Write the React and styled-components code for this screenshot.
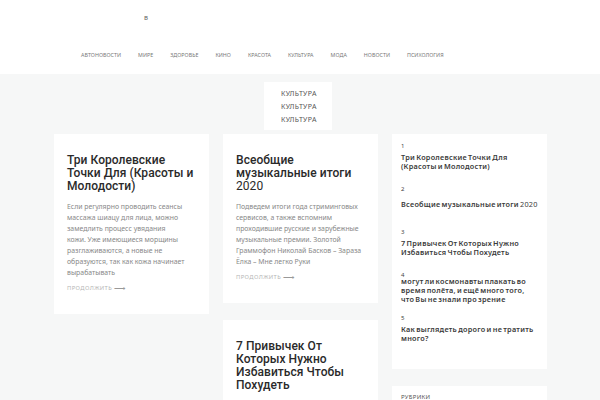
import React from "react";
import styled, { createGlobalStyle } from "styled-components";

const Global = createGlobalStyle`
  html, body { margin: 0; padding: 0; background: #f6f7f7; }
  body { font-family: "Noto Sans", "Open Sans", sans-serif; overflow: hidden; }
  * { box-sizing: border-box; }
`;

const Page = styled.div`
  width: 600px;
  height: 400px;
  overflow: hidden;
  background: #f6f7f7;
`;

const Header = styled.header`
  background: #fff;
  height: 74px;
  display: flex;
  flex-direction: column;
`;

const Logo = styled.div`
  height: 36px;
  padding: 13px 0 0 144px;
  font-size: 7px;
  line-height: 10px;
  color: #666;
`;

const Nav = styled.nav`
  display: flex;
  gap: 17px;
  padding-left: 81px;
`;

const NavItem = styled.div`
  position: relative;
  font-size: 5.35px;
  line-height: 38px;
  letter-spacing: 0.02px;
  text-transform: uppercase;
  color: #777;
  white-space: nowrap;
`;

const Dropdown = styled.div`
  position: absolute;
  top: 46px;
  left: -24px;
  width: 68px;
  background: #fff;
  padding: 5px 0 4px 17px;
  display: flex;
  flex-direction: column;
  z-index: 2;
`;

const DropItem = styled.div`
  font-size: 7px;
  line-height: 13px;
  letter-spacing: 0.3px;
  color: #555;
  text-transform: uppercase;
`;

const Main = styled.main`
  width: 492px;
  margin: 60px auto 0;
  display: flex;
  gap: 14px;
  align-items: flex-start;
`;

const Column = styled.div`
  width: 155px;
  flex: none;
  display: flex;
  flex-direction: column;
  gap: 17px;
`;

const Card = styled.article`
  background: #fff;
  padding: 20px 10px 22px 13px;
`;

const Title = styled.h2`
  margin: 0 -2px 0 0;
  font-family: "Roboto", "Noto Sans", sans-serif;
  font-weight: 500;
  font-size: 12px;
  line-height: 13px;
  letter-spacing: 0.05px;
  color: #2a2a2a;
`;

const Light = styled.span`
  font-weight: 400;
`;

const Excerpt = styled.p`
  margin: 8px 0 0;
  font-size: 6.9px;
  line-height: 11px;
  color: #888;
  white-space: pre-line;
`;

const More = styled.div`
  margin-top: 6px;
  font-size: 5.8px;
  line-height: 8px;
  letter-spacing: 0.4px;
  color: #b5b5b5;
  text-transform: uppercase;
  display: flex;
  align-items: center;
  gap: 2px;
`;

const Arrow = styled.span`
  font-size: 8px;
  line-height: 8px;
  color: #999;
`;

const Widget = styled.aside`
  background: #fff;
  padding: 8px 6px 12px 9px;
`;

const Item = styled.div`
  height: 30px;
  margin-bottom: 13px;
  display: flex;
  flex-direction: column;
`;

const Num = styled.div`
  font-size: 6px;
  line-height: 9px;
  color: #444;
`;

const ItemTitleBox = styled.div`
  height: 21px;
  display: flex;
  align-items: center;
`;

const ItemTitle = styled.div`
  font-size: 7.3px;
  line-height: 8.7px;
  font-weight: 600;
  letter-spacing: 0.25px;
  word-spacing: -1px;
  color: #3a3a3a;
  white-space: pre-line;
`;

const WidgetTitle = styled.div`
  font-size: 6px;
  line-height: 8px;
  letter-spacing: 0.3px;
  text-transform: uppercase;
  color: #555;
`;

const SmallWidget = styled(Widget)`
  padding: 7px 9px 20px;
`;

const navItems = [
  "Автоновости",
  "Мире",
  "Здоровье",
  "Кино",
  "Красота",
  "Культура",
  "Мода",
  "Новости",
  "Психология",
];

const popular = [
  "Три Королевские Точки Для (Красоты и Молодости)",
  <>
    Всеобщие музыкальные итоги <Light>2020</Light>
  </>,
  "7 Привычек От Которых Нужно Избавиться Чтобы Похудеть",
  "могут ли космонавты плакать во\nвремя полёта, и ещё много того,\nчто Вы не знали про зрение",
  "Как выглядеть дорого и не тратить много?",
];

const excerpt1 =
  "Если регулярно проводить сеансы\nмассажа шиацу для лица, можно\nзамедлить процесс увядания\nкожи. Уже имеющиеся морщины\nразглаживаются, а новые не\nобразуются, так как кожа начинает\nвырабатывать";

const excerpt2 =
  "Подведем итоги года стриминговых\nсервисов, а также вспомним\nпроходившие русские и зарубежные\nмузыкальные премии. Золотой\nГраммофон Николай Басков – Зараза\nЁлка – Мне легко Руки";

export default function App() {
  return (
    <Page>
      <Global />
      <Header>
        <Logo>в</Logo>
        <Nav>
          {navItems.map((n) => (
            <NavItem key={n}>
              {n}
              {n === "Культура" && (
                <Dropdown>
                  <DropItem>Культура</DropItem>
                  <DropItem>Культура</DropItem>
                  <DropItem>Культура</DropItem>
                </Dropdown>
              )}
            </NavItem>
          ))}
        </Nav>
      </Header>
      <Main>
        <Column>
          <Card>
            <Title>Три Королевские Точки Для (Красоты и Молодости)</Title>
            <Excerpt>{excerpt1}</Excerpt>
            <More>
              Продолжить <Arrow>⟶</Arrow>
            </More>
          </Card>
        </Column>
        <Column>
          <Card>
            <Title>
              Всеобщие музыкальные итоги <Light>2020</Light>
            </Title>
            <Excerpt>{excerpt2}</Excerpt>
            <More>
              Продолжить <Arrow>⟶</Arrow>
            </More>
          </Card>
          <Card>
            <Title>7 Привычек От Которых Нужно Избавиться Чтобы Похудеть</Title>
          </Card>
        </Column>
        <Column>
          <Widget>
            {popular.map((p, i) => (
              <Item key={i}>
                <Num>{i + 1}</Num>
                <ItemTitleBox>
                  <ItemTitle>{p}</ItemTitle>
                </ItemTitleBox>
              </Item>
            ))}
          </Widget>
          <SmallWidget>
            <WidgetTitle>Рубрики</WidgetTitle>
          </SmallWidget>
        </Column>
      </Main>
    </Page>
  );
}
